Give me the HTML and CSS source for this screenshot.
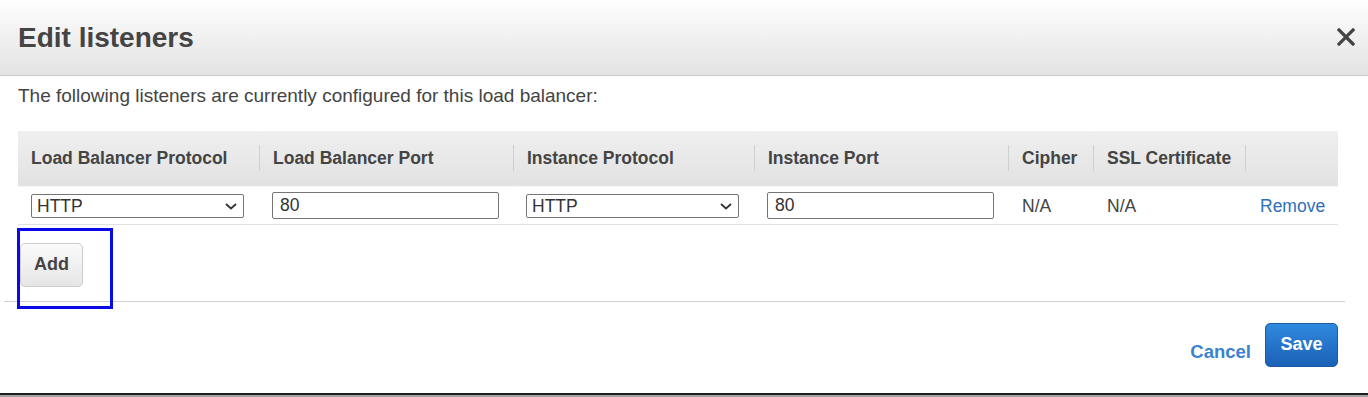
FILE: index.html
```html
<!DOCTYPE html>
<html>
<head>
	<meta charset="utf-8">
	<title>Edit listeners</title>
	<link rel="stylesheet" href="styles.css">
</head>
<body>
  <div class="modal">
    <div class="modal-header">
      <h2>Edit listeners</h2>
      <svg class="close" width="18" height="18" viewBox="0 0 18 18">
        <path d="M2 2 L16 16 M16 2 L2 16" stroke="#444" stroke-width="3.2" stroke-linecap="square"/>
      </svg>
    </div>

    <div class="modal-body">
      <p class="intro">The following listeners are currently configured for this load balancer:</p>

      <table class="listeners">
        <colgroup>
          <col style="width:241px">
          <col style="width:254px">
          <col style="width:241px">
          <col style="width:254px">
          <col style="width:85px">
          <col style="width:152px">
          <col style="width:93px">
        </colgroup>
        <thead>
          <tr>
            <th><div class="th-in first">Load Balancer Protocol</div></th>
            <th><div class="th-in">Load Balancer Port</div></th>
            <th><div class="th-in">Instance Protocol</div></th>
            <th><div class="th-in">Instance Port</div></th>
            <th><div class="th-in">Cipher</div></th>
            <th><div class="th-in">SSL Certificate</div></th>
            <th><div class="th-in">&nbsp;</div></th>
          </tr>
        </thead>
        <tbody>
          <tr>
            <td>
              <div class="select-wrap">
                <select><option>HTTP</option><option>HTTPS</option><option>TCP</option></select>
                <svg class="chevron" width="12" height="7" viewBox="0 0 12 7"><path d="M1 1 L6 5.5 L11 1" fill="none" stroke="#333" stroke-width="1.8"/></svg>
              </div>
            </td>
            <td><input type="text" value="80"></td>
            <td>
              <div class="select-wrap">
                <select><option>HTTP</option><option>HTTPS</option><option>TCP</option></select>
                <svg class="chevron" width="12" height="7" viewBox="0 0 12 7"><path d="M1 1 L6 5.5 L11 1" fill="none" stroke="#333" stroke-width="1.8"/></svg>
              </div>
            </td>
            <td><input type="text" value="80"></td>
            <td class="plain">N/A</td>
            <td class="plain">N/A</td>
            <td class="action"><a href="#" class="link">Remove</a></td>
          </tr>
        </tbody>
      </table>

      <button class="btn btn-add">Add</button>
    </div>

    <div class="modal-footer">
      <a href="#" class="cancel">Cancel</a>
      <button class="btn btn-primary">Save</button>
    </div>

    <!-- highlight box drawn over the Add button -->
    <div class="highlight"></div>
  </div>
</body>
</html>
```

FILE: styles.css
```css
body {
	margin: 0;
	background-color: #a3a3a3;
	font-family: 'Liberation Sans', Arial, sans-serif;
	color: #444;
}

.modal {
	position: relative;
	background-color: #fff;
	height: 393px;
	border-bottom: 2px solid #1e1e1e;
}

.modal-header {
	display: flex;
	justify-content: space-between;
	align-items: center;
	height: 75px;
	padding: 0 13px 0 18px;
	background: linear-gradient(#fefefe, #e3e3e3);
	border-bottom: 1px solid #c9c9c9;
}

.modal-header h2 {
	margin: 0;
	font-size: 28px;
	line-height: 32px;
	font-weight: bold;
	color: #444;
	padding-top: 1px;
}

.close {
	margin-top: -2px;
}

.modal-body {
	padding: 0 18px;
}

.intro {
	margin: 10px 0 0;
	font-size: 19px;
	line-height: 20px;
}

table.listeners {
	margin-top: 25px;
	width: 1320px;
	table-layout: fixed;
	border-collapse: collapse;
	font-size: 17.5px;
}

.listeners th {
	padding: 14px 0 15px;
	text-align: left;
	background: linear-gradient(#efefef, #e2e2e2);
	border-bottom: 1px solid #f6f6f6;
}

.th-in {
	height: 26px;
	line-height: 26px;
	padding-left: 13px;
	border-left: 1px solid #cfcfcf;
	white-space: nowrap;
	font-weight: bold;
	color: #444;
}

.th-in.first {
	border-left: none;
}

.listeners td {
	height: 37px;
	padding: 0 0 0 13px;
	vertical-align: middle;
	border-bottom: 1px solid #e1e1e1;
	line-height: 20px;
}

.listeners td.plain {
	padding-left: 14px;
}

.listeners td.action {
	padding-left: 15px;
}

.select-wrap {
	position: relative;
	width: 213px;
}

select {
	display: block;
	width: 213px;
	height: 24px;
	box-sizing: border-box;
	appearance: none;
	-webkit-appearance: none;
	border: 1px solid #767676;
	border-radius: 2px;
	background: #fff;
	padding: 0 0 0 5px;
	font-family: 'Liberation Sans', Arial, sans-serif;
	font-size: 17.5px;
	color: #333;
}

.chevron {
	position: absolute;
	right: 7px;
	top: 9px;
}

input[type=text] {
	display: block;
	width: 227px;
	height: 27px;
	box-sizing: border-box;
	border: 1px solid #767676;
	border-radius: 2px;
	padding: 0 7px;
	font-family: 'Liberation Sans', Arial, sans-serif;
	font-size: 17.5px;
	color: #333;
}

a.link {
	color: #2d6fb7;
	text-decoration: none;
}

.btn {
	display: block;
	box-sizing: border-box;
	height: 44px;
	padding: 10px 0 12px;
	border-radius: 5px;
	font-family: 'Liberation Sans', Arial, sans-serif;
	font-size: 18px;
	line-height: 20px;
	font-weight: bold;
	text-align: center;
	cursor: pointer;
}

.btn-add {
	width: 63px;
	margin: 18px 0 0 2px;
	border: 1px solid #cdcdcd;
	background: linear-gradient(#fafafa, #e6e6e6);
	color: #444;
}

.modal-footer {
	display: flex;
	justify-content: flex-end;
	align-items: flex-end;
	margin: 14px 23px 0 4px;
	padding: 21px 7px 0 0;
	border-top: 1px solid #cfcfcf;
}

.cancel {
	margin-right: 14px;
	padding-bottom: 5px;
	font-size: 18.5px;
	line-height: 20px;
	font-weight: bold;
	color: #3a82d2;
	text-decoration: none;
}

.btn-primary {
	width: 73px;
	border: 1px solid #1b5aa6;
	background: linear-gradient(#2f89de, #1b61b6);
	color: #fff;
}

.highlight {
	position: absolute;
	left: 17px;
	top: 228px;
	width: 96px;
	height: 81px;
	box-sizing: border-box;
	border: 3px solid #0a0ae8;
}
```
